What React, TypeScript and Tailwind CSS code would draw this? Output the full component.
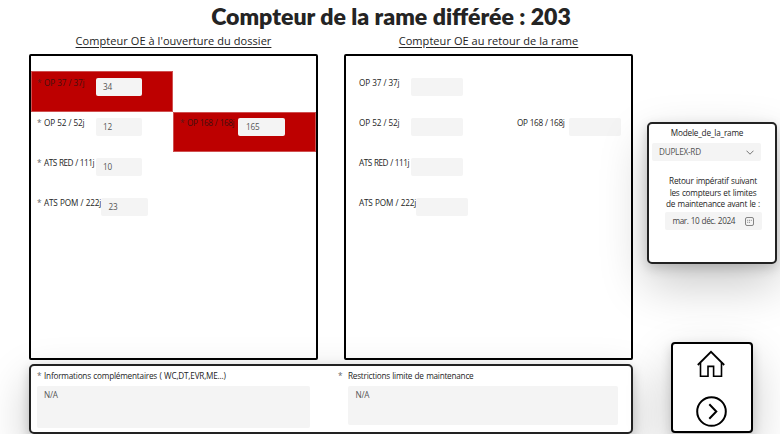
import React from "react";

const ui = "font-['Open_Sans','Noto_Sans',sans-serif]";

type FieldProps = {
  label: string;
  value?: string;
  required?: boolean;
  alert?: boolean;
  className?: string;
  labelClass: string;
  inputClass: string;
};

function Field({ label, value, required, alert, className = "", labelClass, inputClass }: FieldProps) {
  return (
    <div
      className={`flex h-full items-start pt-[6.2px] ${
        alert ? "bg-[#bd0000] outline-1 -outline-offset-1 outline-[#cf5050]" : ""
      } ${className}`}
    >
      <div className={`flex shrink-0 whitespace-nowrap leading-[10px] ${alert ? "text-[#42100f]" : "text-[#242424]"} ${labelClass}`}>
        {required && <span className={`w-[7px] shrink-0 ${alert ? "text-[#5a1a1a]" : "text-[#666]"}`}>*</span>}
        <span>{label}</span>
      </div>
      <div
        className={`h-[18.3px] shrink-0 rounded-[2px] bg-[#f4f4f4] pl-[7.5px] leading-[18px] tracking-[-0.15px] text-[#555] ${inputClass}`}
      >
        {value}
      </div>
    </div>
  );
}

function HomeIcon() {
  return (
    <svg width="28" height="28" viewBox="0 0 28 28" fill="none" stroke="#000">
      <path d="M.8 15 14 1.8 27.2 15" strokeWidth="1.8" />
      <path d="M3.5 13v13.2h7.5V16.4h5.6v9.8h7.9V13" strokeWidth="1.6" />
    </svg>
  );
}

function NextIcon() {
  return (
    <svg width="31" height="31" viewBox="0 0 31 31" fill="none" stroke="#000" strokeWidth="2">
      <circle cx="15.5" cy="15.5" r="14.3" />
      <path d="m13.3 8.3 7 7.2-7 7.2" />
    </svg>
  );
}

export default function App() {
  return (
    <div className={`flex h-[434px] w-[780px] overflow-hidden bg-white text-[8.2px] tracking-[-0.24px] [word-spacing:0.5px] ${ui}`}>
      <main className="ml-[29px] flex w-[604px] shrink-0 flex-col">
        <h1 className="flex h-[32px] items-center justify-center pl-[120px] whitespace-nowrap font-[Lato] text-[23.1px] font-extrabold tracking-normal text-[#242424] [word-spacing:0px]">
          Compteur de la rame différée : 203
        </h1>
        <div className="flex h-[22px] justify-between text-[11px] leading-[18px] tracking-[0.06px] text-[#242424] [word-spacing:0px]">
          <h2 className="w-[289px] text-center whitespace-nowrap underline underline-offset-2">
            Compteur OE à l'ouverture du dossier
          </h2>
          <h2 className="w-[289px] text-center whitespace-nowrap underline underline-offset-2">
            Compteur OE au retour de la rame
          </h2>
        </div>
        <div className="flex h-[306px] justify-between">
          <section className="w-[289px] rounded-[2px] border-2 border-black pt-[15.45px]">
            <div className="flex h-[40.2px]">
              <Field required alert label="OP 37 / 37j" value="34" className="w-[142.4px] pl-[6px]" labelClass="w-[58.5px]" inputClass="w-[46.5px]" />
            </div>
            <div className="flex h-[40.2px]">
              <Field required label="OP 52 / 52j" value="12" className="w-[142.4px] pl-[6px]" labelClass="w-[58.5px]" inputClass="w-[46.5px]" />
              <Field required alert label="OP 168 / 168j" value="165" className="flex-1 pl-[6.5px]" labelClass="w-[58.5px] tracking-[-0.38px]" inputClass="w-[46.5px]" />
            </div>
            <div className="flex h-[40.2px]">
              <Field required label="ATS RED / 111j" value="10" className="pl-[6px]" labelClass="w-[58.5px] tracking-[-0.48px]" inputClass="w-[46.5px]" />
            </div>
            <div className="flex h-[40.2px]">
              <Field required label="ATS POM / 222j" value="23" className="pl-[6px]" labelClass="w-[64px] tracking-[-0.2px]" inputClass="w-[46.5px]" />
            </div>
          </section>
          <section className="w-[289px] rounded-[2px] border-2 border-black pt-[15.45px]">
            <div className="flex h-[40.2px]">
              <Field label="OP 37 / 37j" className="pl-[13px]" labelClass="w-[52px]" inputClass="w-[52px]" />
            </div>
            <div className="flex h-[40.2px]">
              <Field label="OP 52 / 52j" className="w-[158px] pl-[13px]" labelClass="w-[52px]" inputClass="w-[52px]" />
              <Field label="OP 168 / 168j" className="pl-[13px]" labelClass="w-[52px] tracking-[-0.38px]" inputClass="w-[52px]" />
            </div>
            <div className="flex h-[40.2px]">
              <Field label="ATS RED / 111j" className="pl-[13px]" labelClass="w-[52px] tracking-[-0.48px]" inputClass="w-[52px]" />
            </div>
            <div className="flex h-[40.2px]">
              <Field label="ATS POM / 222j" className="pl-[13px]" labelClass="w-[57px] tracking-[-0.2px]" inputClass="w-[52px]" />
            </div>
          </section>
        </div>
        <section className="mt-[4px] flex h-[69.5px] shrink-0 rounded-[5px] border-2 border-[#222] bg-white pt-[4.5px] text-[#242424] shadow-[0_18px_45px_rgba(0,0,0,0.22),0_4px_11px_rgba(0,0,0,0.18)]">
          <div className="w-[301px] pl-[6px]">
            <div className="flex h-[15px] whitespace-nowrap leading-[10px]">
              <span className="w-[7px] text-[#666]">*</span>
              <span className="tracking-[-0.2px]">Informations complémentaires ( WC,DT,EVR,ME...)</span>
            </div>
            <div className="h-[42px] w-[273px] rounded-[2px] bg-[#f4f4f4] pl-[7px] leading-[18px] text-[#555]">N/A</div>
          </div>
          <div className="pl-[6px]">
            <div className="flex h-[15px] whitespace-nowrap leading-[10px]">
              <span className="w-[10px] text-[#666]">*</span>
              <span className="tracking-[-0.23px]">Restrictions limite de maintenance</span>
            </div>
            <div className="ml-[10px] h-[39px] w-[270px] rounded-[2px] bg-[#f4f4f4] pl-[7.5px] leading-[18px] text-[#555]">N/A</div>
          </div>
        </section>
      </main>
      <aside className="ml-[14px] flex w-[130px] shrink-0 flex-col pt-[121.5px]">
        <section className="flex h-[142px] shrink-0 flex-col rounded-[5px] border-2 border-[#222] bg-white text-[#242424] shadow-[0_20px_48px_rgba(0,0,0,0.22),0_4px_12px_rgba(0,0,0,0.18)]">
          <div className="mt-[4.5px] h-[15px] pr-[10px] text-center leading-[10px] tracking-[-0.18px]">Modele_de_la_rame</div>
          <div className="ml-[3px] flex h-[18px] w-[109px] items-center justify-between rounded-[2px] bg-[#f4f4f4] pr-[7px] pl-[7px] text-[#555]">
            <span className="tracking-[-0.24px]">DUPLEX-RD</span>
            <svg width="8" height="5" viewBox="0 0 8 5" fill="none" stroke="#555" strokeWidth="0.8">
              <path d="m.5.7 3.5 3.5L7.5.7" />
            </svg>
          </div>
          <p className="mt-[14px] ml-[7px] w-[114px] text-center leading-[11.5px] whitespace-nowrap">
            Retour impératif suivant
            <br />
            les compteurs et limites
            <br />
            de maintenance avant le :
          </p>
          <div className="mt-[2.5px] ml-[16px] flex h-[18px] w-[96.5px] items-center justify-between rounded-[2px] bg-[#f4f4f4] pr-[7.5px] pl-[7.5px] text-[#444]">
            <span className="whitespace-nowrap tracking-[-0.4px]">mar. 10 déc. 2024</span>
            <svg width="9" height="9" viewBox="0 0 9 9" fill="none" stroke="#555" strokeWidth="0.7">
              <rect x=".5" y=".5" width="8" height="8" rx="1.5" />
              <path d="M2.2 3.3h4.6" strokeDasharray="1 .8" />
              <path d="M2.2 5.3h2.8" strokeDasharray="1 .8" />
            </svg>
          </div>
        </section>
        <nav className="mt-[78px] ml-[23.5px] flex h-[91.5px] w-[82px] shrink-0 flex-col items-center rounded-[4px] border-2 border-black bg-white pt-[6.5px] pr-[1px] shadow-[0_18px_45px_rgba(0,0,0,0.22),0_4px_11px_rgba(0,0,0,0.16)]">
          <HomeIcon />
          <div className="mt-[17.5px]">
            <NextIcon />
          </div>
        </nav>
      </aside>
    </div>
  );
}
